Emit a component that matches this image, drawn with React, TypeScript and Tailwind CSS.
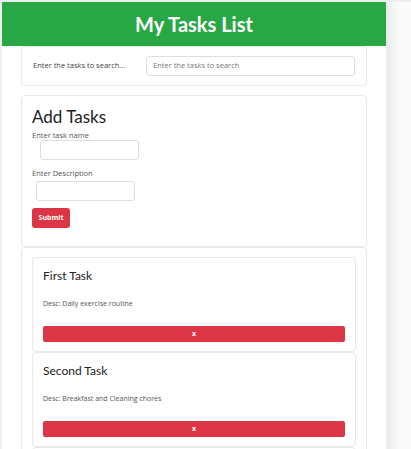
const tasks = [
  { name: "First Task", desc: "Daily exercise routine" },
  { name: "Second Task", desc: "Breakfast and Cleaning chores" },
];

const heading = { fontFamily: 'Lato, "Open Sans", sans-serif' };

export default function App() {
  return (
    <div
      className="h-[449px] overflow-hidden border-l-2 border-t-2 border-[#efefef] bg-[#fafafa]"
      style={{ fontFamily: '"Open Sans", "Noto Sans", sans-serif' }}
    >
      <div className="h-[500px] w-[384px] bg-white shadow-[6px_0_10px_rgba(0,0,0,0.07)]">
        <header className="flex h-[44px] items-center justify-center bg-[#28a745]">
          <h1 className="text-[20px] font-bold text-white" style={heading}>
            My Tasks List
          </h1>
        </header>

        <div className="px-[19px]">
          <div className="flex h-[40px] items-center rounded border border-[#e8e8e8] px-[11px]">
            <span className="w-[113px] text-[7.5px] text-[#444]">Enter the tasks to search...</span>
            <div className="flex h-[20px] flex-1 items-center rounded-[3px] border border-[#dedede] px-[6px] text-[7.5px] text-[#777]">
              Enter the tasks to search
            </div>
          </div>

          <div className="mt-[9px] h-[152px] rounded border border-[#e8e8e8] px-[10px] pt-[8px]">
            <h2 className="text-[17px] leading-[26px] text-[#222]" style={heading}>
              Add Tasks
            </h2>
            <div className="text-[7.5px] leading-[10px] text-[#555]">Enter task name</div>
            <div className="ml-[8px] h-[20px] w-[99px] rounded-[3px] border border-[#dedede]" />
            <div className="mt-[8px] text-[7.5px] leading-[10px] text-[#555]">Enter Description</div>
            <div className="ml-[4px] mt-[3px] h-[20px] w-[99px] rounded-[3px] border border-[#dedede]" />
            <button className="mt-[7px] flex h-[20px] w-[38px] items-center justify-center rounded-[3px] bg-[#dc3545] text-[7px] font-bold text-white">
              Submit
            </button>
          </div>

          <div className="rounded border border-[#e8e8e8] px-[10px] pt-[9px]">
            {tasks.map((t) => (
              <div key={t.name} className="h-[95px] rounded border border-[#e8e8e8] px-[10px] pt-[10px]">
                <h3 className="text-[12px] leading-[16px] text-[#222]" style={heading}>
                  {t.name}
                </h3>
                <p className="mt-[15px] text-[7px] leading-[10px] text-[#555]">Desc: {t.desc}</p>
                <button className="mt-[17px] flex h-[16px] w-full items-center justify-center rounded-[2px] bg-[#dc3545] text-[7px] font-bold text-white">
                  x
                </button>
              </div>
            ))}
            <div className="h-[95px] rounded border border-[#e8e8e8]" />
          </div>
        </div>
      </div>
    </div>
  );
}
